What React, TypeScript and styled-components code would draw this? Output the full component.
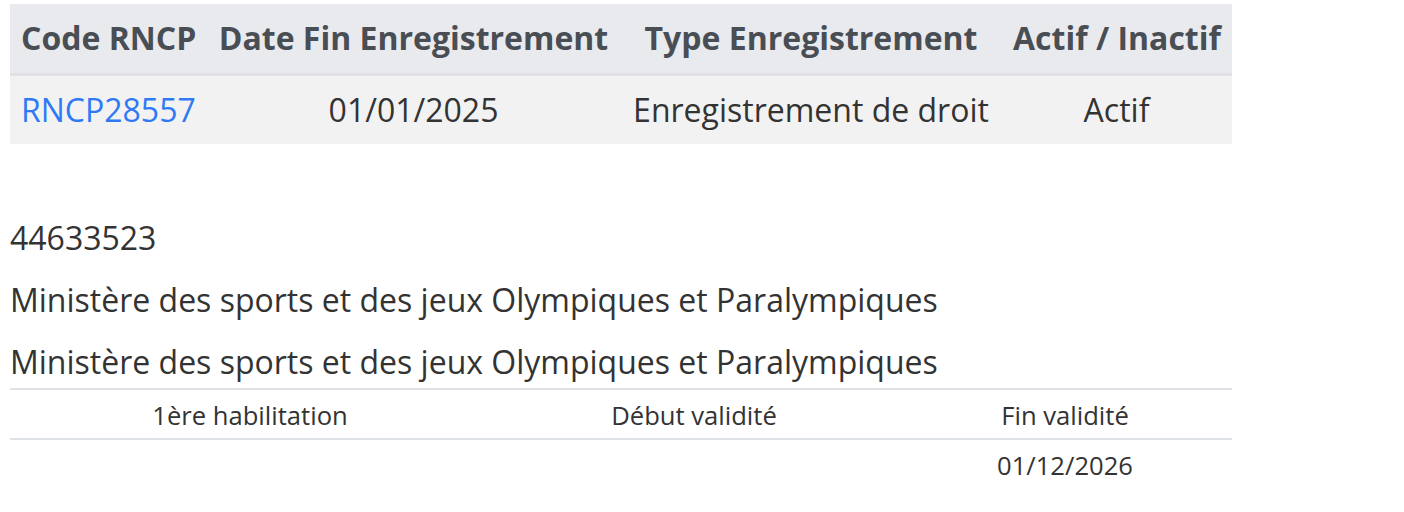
import React from "react";
import styled, { createGlobalStyle } from "styled-components";

const Global = createGlobalStyle`
  html, body { margin: 0; padding: 0; background: #fff; }
  body { font-family: "Open Sans", "Noto Sans", sans-serif; color: #333; }
`;

const Page = styled.div`
  padding: 4px 0 0 10px;
  width: 1222px;
`;

const Table = styled.table`
  width: 100%;
  border-collapse: collapse;
  table-layout: fixed;
  font-size: 32px;
  line-height: 48px;
`;

const HeadCell = styled.th<{ $align?: string }>`
  background: #e9eaee;
  color: #494e55;
  font-weight: 700;
  padding: 10px 12px 11px 11px;
  text-align: ${(p) => p.$align || "center"};
  border-bottom: 3px solid #dfe1e5;
  white-space: nowrap;
`;

const Cell = styled.td<{ $align?: string }>`
  background: #f2f2f2;
  padding: 10px 12px 10px 11px;
  text-align: ${(p) => p.$align || "center"};
  color: #333;
  white-space: nowrap;
`;

const Link = styled.a`
  color: #2f7af4;
  text-decoration: none;
`;

const Info = styled.p<{ $top: number }>`
  margin: ${(p) => p.$top}px 0 0;
  font-size: 32px;
  line-height: 48px;
  color: #333;
`;

const SubTable = styled.table`
  width: 100%;
  border-collapse: collapse;
  table-layout: fixed;
  margin-top: 2px;
  font-size: 25.6px;
  line-height: 38px;
`;

const SubHead = styled.th`
  font-weight: 400;
  color: #333;
  text-align: center;
  padding: 7px 0 3px;
  border-top: 2px solid #dee2e6;
  border-bottom: 2px solid #dee2e6;
`;

const SubCell = styled.td`
  text-align: center;
  color: #333;
  padding: 7px 0;
`;

export default function App() {
  return (
    <>
      <Global />
      <Page>
        <Table>
          <colgroup>
            <col style={{ width: 197 }} />
            <col style={{ width: 414 }} />
            <col style={{ width: 381 }} />
            <col style={{ width: 230 }} />
          </colgroup>
          <thead>
            <tr>
              <HeadCell $align="left">Code RNCP</HeadCell>
              <HeadCell>Date Fin Enregistrement</HeadCell>
              <HeadCell>Type Enregistrement</HeadCell>
              <HeadCell>Actif / Inactif</HeadCell>
            </tr>
          </thead>
          <tbody>
            <tr>
              <Cell $align="left">
                <Link href="#">RNCP28557</Link>
              </Cell>
              <Cell>01/01/2025</Cell>
              <Cell>Enregistrement de droit</Cell>
              <Cell>Actif</Cell>
            </tr>
          </tbody>
        </Table>
        <Info $top={70}>44633523</Info>
        <Info $top={14}>Ministère des sports et des jeux Olympiques et Paralympiques</Info>
        <Info $top={14}>Ministère des sports et des jeux Olympiques et Paralympiques</Info>
        <SubTable>
          <colgroup>
            <col style={{ width: 480 }} />
            <col style={{ width: 408 }} />
            <col style={{ width: 334 }} />
          </colgroup>
          <thead>
            <tr>
              <SubHead>1ère habilitation</SubHead>
              <SubHead>Début validité</SubHead>
              <SubHead>Fin validité</SubHead>
            </tr>
          </thead>
          <tbody>
            <tr>
              <SubCell></SubCell>
              <SubCell></SubCell>
              <SubCell>01/12/2026</SubCell>
            </tr>
          </tbody>
        </SubTable>
      </Page>
    </>
  );
}
